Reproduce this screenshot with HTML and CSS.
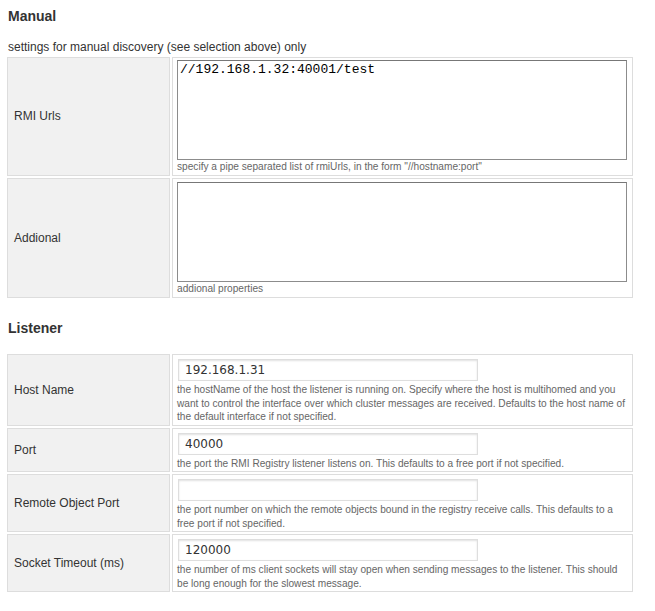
FILE: index.html
```html
<!DOCTYPE html>
<html>
<head>
<meta charset="utf-8">
<link rel="stylesheet" href="styles.css">
</head>
<body>
<div class="page">
  <h3 class="section-title">Manual</h3>
  <p class="section-desc">settings for manual discovery (see selection above) only</p>
  <table class="settings">
    <tr>
      <th class="label">RMI Urls</th>
      <td class="value">
        <textarea class="area">//192.168.1.32:40001/test</textarea>
        <div class="help">specify a pipe separated list of rmiUrls, in the form "//hostname:port"</div>
      </td>
    </tr>
    <tr class="row-lower">
      <th class="label">Addional</th>
      <td class="value">
        <textarea class="area"></textarea>
        <div class="help">addional properties</div>
      </td>
    </tr>
  </table>

  <h3 class="section-title listener">Listener</h3>
  <table class="settings">
    <tr>
      <th class="label">Host Name</th>
      <td class="value">
        <input class="field" type="text" value="192.168.1.31">
        <div class="help">the hostName of the host the listener is running on. Specify where the host is multihomed and you want to control the interface over which cluster messages are received. Defaults to the host name of the default interface if not specified.</div>
      </td>
    </tr>
    <tr>
      <th class="label">Port</th>
      <td class="value">
        <input class="field" type="text" value="40000">
        <div class="help">the port the RMI Registry listener listens on. This defaults to a free port if not specified.</div>
      </td>
    </tr>
    <tr>
      <th class="label">Remote Object Port</th>
      <td class="value">
        <input class="field" type="text" value="">
        <div class="help">the port number on which the remote objects bound in the registry receive calls. This defaults to a free port if not specified.</div>
      </td>
    </tr>
    <tr>
      <th class="label">Socket Timeout (ms)</th>
      <td class="value">
        <input class="field" type="text" value="120000">
        <div class="help">the number of ms client sockets will stay open when sending messages to the listener. This should be long enough for the slowest message.</div>
      </td>
    </tr>
  </table>
</div>
</body>
</html>
```

FILE: styles.css
```css
html, body {
  margin: 0;
  padding: 0;
  background: #ffffff;
}

body {
  font-family: "Liberation Sans", Arial, Helvetica, sans-serif;
  font-size: 12px;
  color: #333333;
}

.page {
  padding: 8px 0 0 8px;
}

.section-title {
  margin: 0 0 16px 0;
  font-size: 14px;
  line-height: 16px;
  font-weight: bold;
  color: #333333;
}

.section-title.listener {
  margin-top: 20px;
}

.section-desc {
  margin: 0;
  line-height: 15px;
  color: #333333;
}

.settings {
  margin-left: -3px;
  width: 630px;
  border-collapse: separate;
  border-spacing: 2px;
}

.label {
  width: 149px;
  padding: 0 6px;
  background: #f1f1f1;
  border: 1px solid #dddddd;
  text-align: left;
  font-weight: normal;
  vertical-align: middle;
  color: #333333;
}

.value {
  padding: 2px 4px 1px 4px;
  border: 1px solid #dddddd;
  background: #ffffff;
  vertical-align: top;
}

.area {
  display: block;
  box-sizing: border-box;
  width: 450px;
  height: 100px;
  margin: 0;
  padding: 1px 2px;
  border: 1px solid #8c8c8c;
  border-top-color: #777777;
  resize: none;
  font-family: "Liberation Mono", "Courier New", monospace;
  font-size: 13px;
  line-height: 15px;
  color: #000000;
  background: #ffffff;
}

.row-lower .value {
  padding-top: 3px;
  padding-bottom: 2px;
}

.field {
  display: block;
  box-sizing: border-box;
  width: 300px;
  height: 22px;
  margin: 2px 0 2px 1px;
  padding: 0 6px;
  border: 1px solid #dedede;
  box-shadow: inset 0 1px 2px rgba(0, 0, 0, 0.12);
  font-family: "DejaVu Sans", "Lucida Grande", sans-serif;
  font-size: 12px;
  color: #333333;
  background: #ffffff;
}

.help {
  font-size: 10.15px;
  line-height: 13.5px;
  color: #666666;
}
```
